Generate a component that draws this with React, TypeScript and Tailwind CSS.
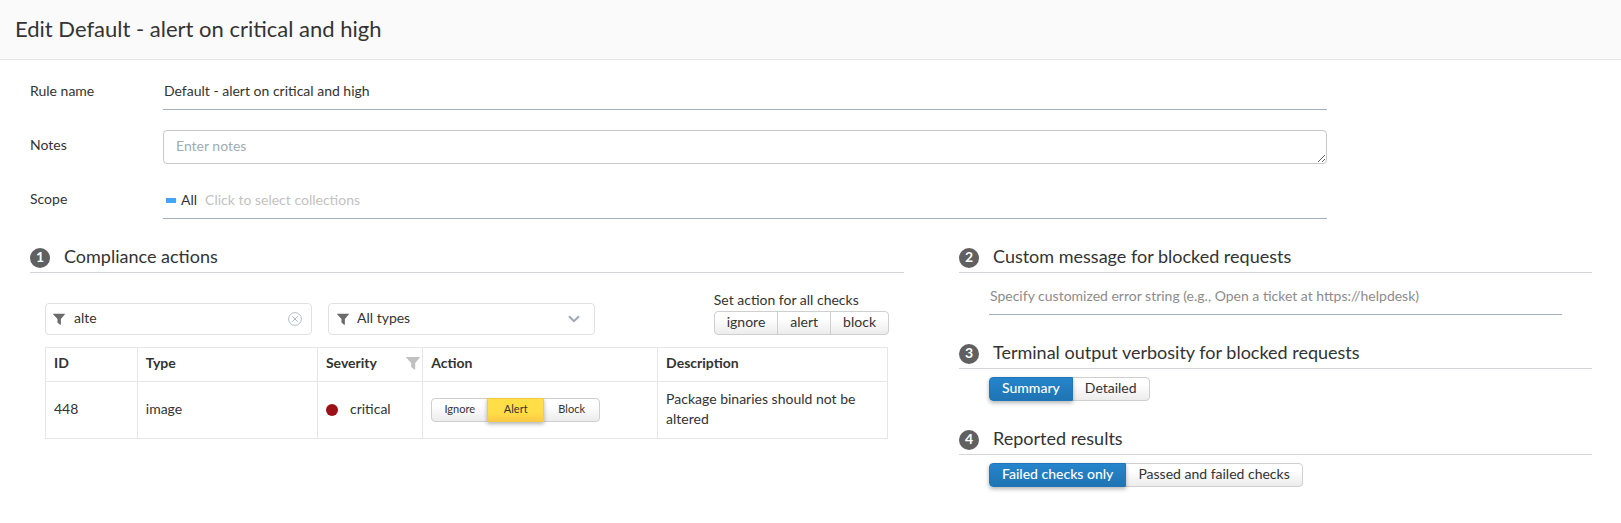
import React, { useState } from "react";

const inputLine = "w-full border-b border-[#a3afba] bg-transparent pb-0.5 outline-none";

function FunnelIcon({ className }: { className?: string }) {
  return (
    <svg viewBox="0 0 14 14" aria-hidden="true" className={className} fill="currentColor">
      <path d="M0.1 0.9H13.9V1.6L9.2 7V13.6H8.2L5.2 11V7L0.1 1.6Z" />
    </svg>
  );
}

function ClearIcon() {
  return (
    <svg viewBox="0 0 14 14" aria-hidden="true" className="size-3.5" fill="none" stroke="currentColor">
      <circle cx="7" cy="7" r="6.4" strokeWidth="0.9" />
      <path d="M4.3 4.3L9.7 9.7M9.7 4.3L4.3 9.7" strokeWidth="1" />
    </svg>
  );
}

function SectionHeading({ step, children }: { step: number; children: React.ReactNode }) {
  return (
    <h2 className="flex h-[31px] items-center gap-3.5 border-b border-[#d3d5d8] text-lg leading-6">
      <span className="mt-0.5 flex size-5 shrink-0 items-center justify-center rounded-full bg-[#606060] pb-0.5 text-sm font-bold leading-5 text-white">
        {step}
      </span>
      <span className="pb-0.5">{children}</span>
    </h2>
  );
}

type Tone = "none" | "blue" | "yellow";

function ButtonGroup({
  label,
  options,
  initial,
  tone,
  compact = false,
}: {
  label: string;
  options: string[];
  initial?: string;
  tone: Tone;
  compact?: boolean;
}) {
  const [selected, setSelected] = useState(initial);
  const active =
    tone === "blue"
      ? "border-[#1f76b8] bg-linear-to-b from-[#2585cb] to-[#1f74b3] font-medium text-white shadow-[0_2px_4px_rgba(0,0,0,0.3)]"
      : "border-[#f3cc45] bg-linear-to-b from-[#ffde47] from-60% to-[#ffca45] shadow-[0_2px_4px_rgba(0,0,0,0.3)]";
  const idle = "border-[#cfcfcf] bg-linear-to-b from-white from-30% to-[#ececec]";
  const size = compact ? "min-w-[57px] px-3 text-[11px]" : "px-3 text-sm";
  return (
    <div role="group" aria-label={label} className="flex w-fit">
      {options.map((option) => (
        <button
          key={option}
          type="button"
          aria-pressed={selected === option}
          onClick={() => tone !== "none" && setSelected(option)}
          className={`-ml-px h-6 border pb-0.5 leading-5 first:ml-0 first:rounded-l last:rounded-r ${size} ${
            selected === option ? `relative ${active}` : idle
          }`}
        >
          {option}
        </button>
      ))}
    </div>
  );
}

export default function App() {
  const [filter, setFilter] = useState("alte");
  return (
    <main className="min-h-screen bg-white font-['Lato',sans-serif] text-sm leading-5 text-[#333]">
      <header className="flex h-15 items-center border-b border-[#e3e4e5] bg-[#fafafa] px-[15px] pb-0.5">
        <h1 className="text-[22px] leading-7">Edit Default - alert on critical and high</h1>
      </header>

      <section className="ml-[30px] mr-[294px] flex flex-col pt-3.5">
        <div className="grid grid-cols-[133px_minmax(0,1fr)] items-center">
          <label htmlFor="rule-name" className="pb-0.5">Rule name</label>
          <input id="rule-name" defaultValue="Default - alert on critical and high" className={`${inputLine} h-9 px-px`} />
        </div>
        <div className="mt-5 grid grid-cols-[133px_minmax(0,1fr)]">
          <label htmlFor="notes" className="pt-[5px]">Notes</label>
          <textarea
            id="notes"
            rows={1}
            placeholder="Enter notes"
            className="block h-[34px] w-full resize rounded border border-[#c8c8c8] px-3 py-[5px] placeholder:text-[#a0acb6] outline-none"
          />
        </div>
        <div className="mt-5 grid grid-cols-[133px_minmax(0,1fr)]">
          <label htmlFor="scope" className="pt-[5px]">Scope</label>
          <div className="flex h-[35px] items-center border-b border-[#a3afba] pb-0.5 pl-[3px]">
            <span className="h-[5px] w-2.5 bg-[#42a5f5]" />
            <span className="pl-[5px]">All</span>
            <input
              id="scope"
              placeholder="Click to select collections"
              className="ml-2 min-w-0 flex-1 bg-transparent placeholder:text-[#c2c2c2] outline-none"
            />
          </div>
        </div>
      </section>

      <div className="ml-[30px] mr-[29px] mt-[23px] grid grid-cols-[minmax(0,874fr)_minmax(0,633fr)] gap-x-[55px]">
        <section>
          <SectionHeading step={1}>Compliance actions</SectionHeading>
          <div className="pl-[15px]">
            <div className="mt-4 flex items-end gap-4 pr-[15px]">
              <div className="flex h-8 w-[267px] items-center rounded-sm border border-[#dfe1e3] pl-[7px] pr-[9px]">
                <FunnelIcon className="size-3 text-[#6b6b6b]" />
                <input
                  aria-label="Filter checks"
                  value={filter}
                  onChange={(event) => setFilter(event.target.value)}
                  className="ml-[9px] min-w-0 flex-1 bg-transparent pb-0.5 outline-none"
                />
                <button type="button" aria-label="Clear filter" onClick={() => setFilter("")} className="text-[#a9b8c2]">
                  <ClearIcon />
                </button>
              </div>
              <div className="flex h-8 w-[267px] items-center rounded-sm border border-[#dfe1e3] pl-2 pr-3.5 text-[#6b6b6b]">
                <FunnelIcon className="size-3" />
                <select aria-label="Type" className="ml-2 flex-1 appearance-none bg-transparent pb-0.5 text-[#333] outline-none">
                  <option>All types</option>
                </select>
                <svg viewBox="0 0 12 8" aria-hidden="true" className="pointer-events-none h-2 w-3 text-[#9ca8b3]" fill="none" stroke="currentColor" strokeWidth="2">
                  <path d="M1 1.2L6 6.2L11 1.2" />
                </svg>
              </div>
              <div className="ml-auto">
                <div className="leading-[22px]">Set action for all checks</div>
                <ButtonGroup label="Set action for all checks" options={["ignore", "alert", "block"]} tone="none" />
              </div>
            </div>

            <div className="mt-3 pr-4">
              <table className="w-full table-fixed border-collapse text-left [&_td]:border [&_td]:border-[#e6e6e6] [&_td]:px-2 [&_th]:border [&_th]:border-[#e6e6e6] [&_th]:px-2 [&_th]:pb-1 [&_th]:font-bold">
                <colgroup>
                  <col className="w-[10.9%]" />
                  <col className="w-[21.4%]" />
                  <col className="w-[12.5%]" />
                  <col className="w-[27.9%]" />
                  <col />
                </colgroup>
                <thead>
                  <tr className="h-[34px]">
                    <th>ID</th>
                    <th>Type</th>
                    <th>
                      <div className="-mr-1.5 flex items-center justify-between">
                        Severity
                        <button type="button" aria-label="Filter by severity" className="text-[#c0c0c0]">
                          <FunnelIcon className="size-3.5" />
                        </button>
                      </div>
                    </th>
                    <th>Action</th>
                    <th>Description</th>
                  </tr>
                </thead>
                <tbody>
                  <tr className="h-[57px]">
                    <td className="pb-0.5">448</td>
                    <td className="pb-0.5">image</td>
                    <td>
                      <div className="flex items-center gap-3">
                        <span className="size-3 rounded-full bg-[#9b1117]" />
                        <span className="pb-0.5">critical</span>
                      </div>
                    </td>
                    <td>
                      <ButtonGroup label="Action for check 448" options={["Ignore", "Alert", "Block"]} initial="Alert" tone="yellow" compact />
                    </td>
                    <td className="pb-0.5">Package binaries should not be altered</td>
                  </tr>
                </tbody>
              </table>
            </div>
          </div>
        </section>

        <section>
          <SectionHeading step={2}>Custom message for blocked requests</SectionHeading>
          <div className="px-[30px] pt-[5px]">
            <input
              aria-label="Custom message for blocked requests"
              placeholder="Specify customized error string (e.g., Open a ticket at https://helpdesk)"
              className={`${inputLine} block h-[37px] px-px placeholder:text-[#8c8c8c]`}
            />
          </div>
          <div className="mt-[23px]">
            <SectionHeading step={3}>Terminal output verbosity for blocked requests</SectionHeading>
            <div className="flex px-[30px] pt-2">
              <ButtonGroup label="Terminal output verbosity" options={["Summary", "Detailed"]} initial="Summary" tone="blue" />
            </div>
          </div>
          <div className="mt-[23px]">
            <SectionHeading step={4}>Reported results</SectionHeading>
            <div className="flex px-[30px] pt-2">
              <ButtonGroup label="Reported results" options={["Failed checks only", "Passed and failed checks"]} initial="Failed checks only" tone="blue" />
            </div>
          </div>
        </section>
      </div>
    </main>
  );
}
